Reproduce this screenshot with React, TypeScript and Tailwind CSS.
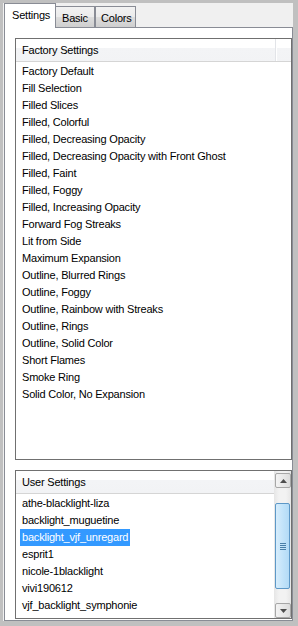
import React from "react";

const factory = [
  "Factory Default",
  "Fill Selection",
  "Filled Slices",
  "Filled, Colorful",
  "Filled, Decreasing Opacity",
  "Filled, Decreasing Opacity with Front Ghost",
  "Filled, Faint",
  "Filled, Foggy",
  "Filled, Increasing Opacity",
  "Forward Fog Streaks",
  "Lit from Side",
  "Maximum Expansion",
  "Outline, Blurred Rings",
  "Outline, Foggy",
  "Outline, Rainbow with Streaks",
  "Outline, Rings",
  "Outline, Solid Color",
  "Short Flames",
  "Smoke Ring",
  "Solid Color, No Expansion",
];

const user = [
  "athe-blacklight-liza",
  "backlight_muguetine",
  "backlight_vjf_unregard",
  "esprit1",
  "nicole-1blacklight",
  "vivi190612",
  "vjf_backlight_symphonie",
  "vjf_backlight_vintage",
];

function Row({ text, selected }: { text: string; selected?: boolean }) {
  return (
    <div className="h-[17px] leading-[17px] pl-[4px] whitespace-nowrap shrink-0">
      <span
        className={
          selected
            ? "inline-block h-[17px] px-[2px] bg-[#3399ff] text-white"
            : "inline-block h-[17px] px-[2px] text-black"
        }
      >
        {text}
      </span>
    </div>
  );
}

function Header({ title, divider }: { title: string; divider?: boolean }) {
  return (
    <div className="h-[23px] shrink-0 flex border-b border-[#d5d5d5] bg-[linear-gradient(#ffffff_0%,#ffffff_40%,#f3f4f6_42%,#f2f3f5_100%)]">
      <div
        className={
          divider
            ? "w-[260px] h-full pl-[6px] leading-[22px] text-black border-r border-[#e2e4e8]"
            : "flex-1 h-full pl-[6px] leading-[22px] text-black"
        }
      >
        {title}
      </div>
      {divider && <div className="flex-1 border-l border-white" />}
    </div>
  );
}

function ScrollButton({ up }: { up?: boolean }) {
  return (
    <div className="ml-[1px] w-[16px] h-[15px] rounded-[2px] border border-[#a7a7a7] bg-[linear-gradient(90deg,#f4f4f4,#e8e8e8_50%,#dcdcdc)] flex items-center justify-center">
      <svg width="7" height="4" viewBox="0 0 7 4">
        {up ? (
          <path d="M3.5 0 L7 4 L0 4 Z" fill="#4d4d4d" />
        ) : (
          <path d="M0 0 L7 0 L3.5 4 Z" fill="#4d4d4d" />
        )}
      </svg>
    </div>
  );
}

export default function App() {
  return (
    <div
      className="w-[298px] h-[626px] bg-[#c0c0c0] pt-[3px] pl-[3px] pr-[5px] pb-[5px] text-[11px] tracking-[-0.2px]"
      style={{ fontFamily: '"Liberation Sans", Arial, sans-serif' }}
    >
      <div className="h-full bg-[#f0f0f0] flex flex-col pl-[1px]">
        {/* tabs */}
        <div className="h-[24px] shrink-0 flex items-end">
          <div className="relative z-10 h-[25px] -mb-[1px] w-[52px] border border-b-0 border-[#898c95] bg-white pl-[7px] pt-[4px] leading-[15px] text-black">
            Settings
          </div>
          <div className="h-[21px] w-[40px] -ml-[1px] border border-b-0 border-[#898c95] bg-[linear-gradient(#f2f2f2,#ebebeb_50%,#dddddd_51%,#cfcfcf)] pl-[6px] pt-[4px] leading-[15px] text-black">
            Basic
          </div>
          <div className="h-[21px] w-[41px] border border-b-0 border-[#898c95] bg-[linear-gradient(#f2f2f2,#ebebeb_50%,#dddddd_51%,#cfcfcf)] pl-[5px] pt-[4px] leading-[15px] text-black">
            Colors
          </div>
        </div>
        {/* panel */}
        <div className="flex-1 border border-[#898c95] bg-white pt-[10px] pl-[10px] flex flex-col gap-[10px] pb-[1px]">
          <div className="h-[422px] shrink-0 border border-[#707070] flex flex-col overflow-hidden">
            <Header title="Factory Settings" divider />
            <div className="mt-[1px] flex flex-col">
              {factory.map((t) => (
                <Row key={t} text={t} />
              ))}
            </div>
          </div>
          <div className="h-[149px] shrink-0 border border-[#707070] flex overflow-hidden">
            <div className="flex-1 flex flex-col overflow-hidden">
              <Header title="User Settings" />
              <div className="mt-[1px] flex flex-col">
                {user.map((t, i) => (
                  <Row key={t} text={t} selected={i === 2} />
                ))}
              </div>
            </div>
            <div className="w-[17px] shrink-0 bg-[linear-gradient(90deg,#e6e6e6,#f2f2f2_30%,#f2f2f2_70%,#e6e6e6)] flex flex-col pt-[2px]">
              <ScrollButton up />
              <div className="h-[15px]" />
              <div className="ml-[1px] w-[15px] h-[86px] rounded-[2px] border border-[#5d98c7] bg-[linear-gradient(90deg,#d7edfc,#c3e4fa_50%,#b3dbf6)] flex items-center justify-center">
                <div className="flex flex-col gap-[1px]">
                  <div className="w-[6px] h-[1px] bg-[#4a7fa8]" />
                  <div className="w-[6px] h-[1px] bg-[#4a7fa8]" />
                  <div className="w-[6px] h-[1px] bg-[#4a7fa8]" />
                  <div className="w-[6px] h-[1px] bg-[#4a7fa8]" />
                </div>
              </div>
              <div className="h-[14px]" />
              <ScrollButton />
            </div>
          </div>
        </div>
      </div>
    </div>
  );
}
